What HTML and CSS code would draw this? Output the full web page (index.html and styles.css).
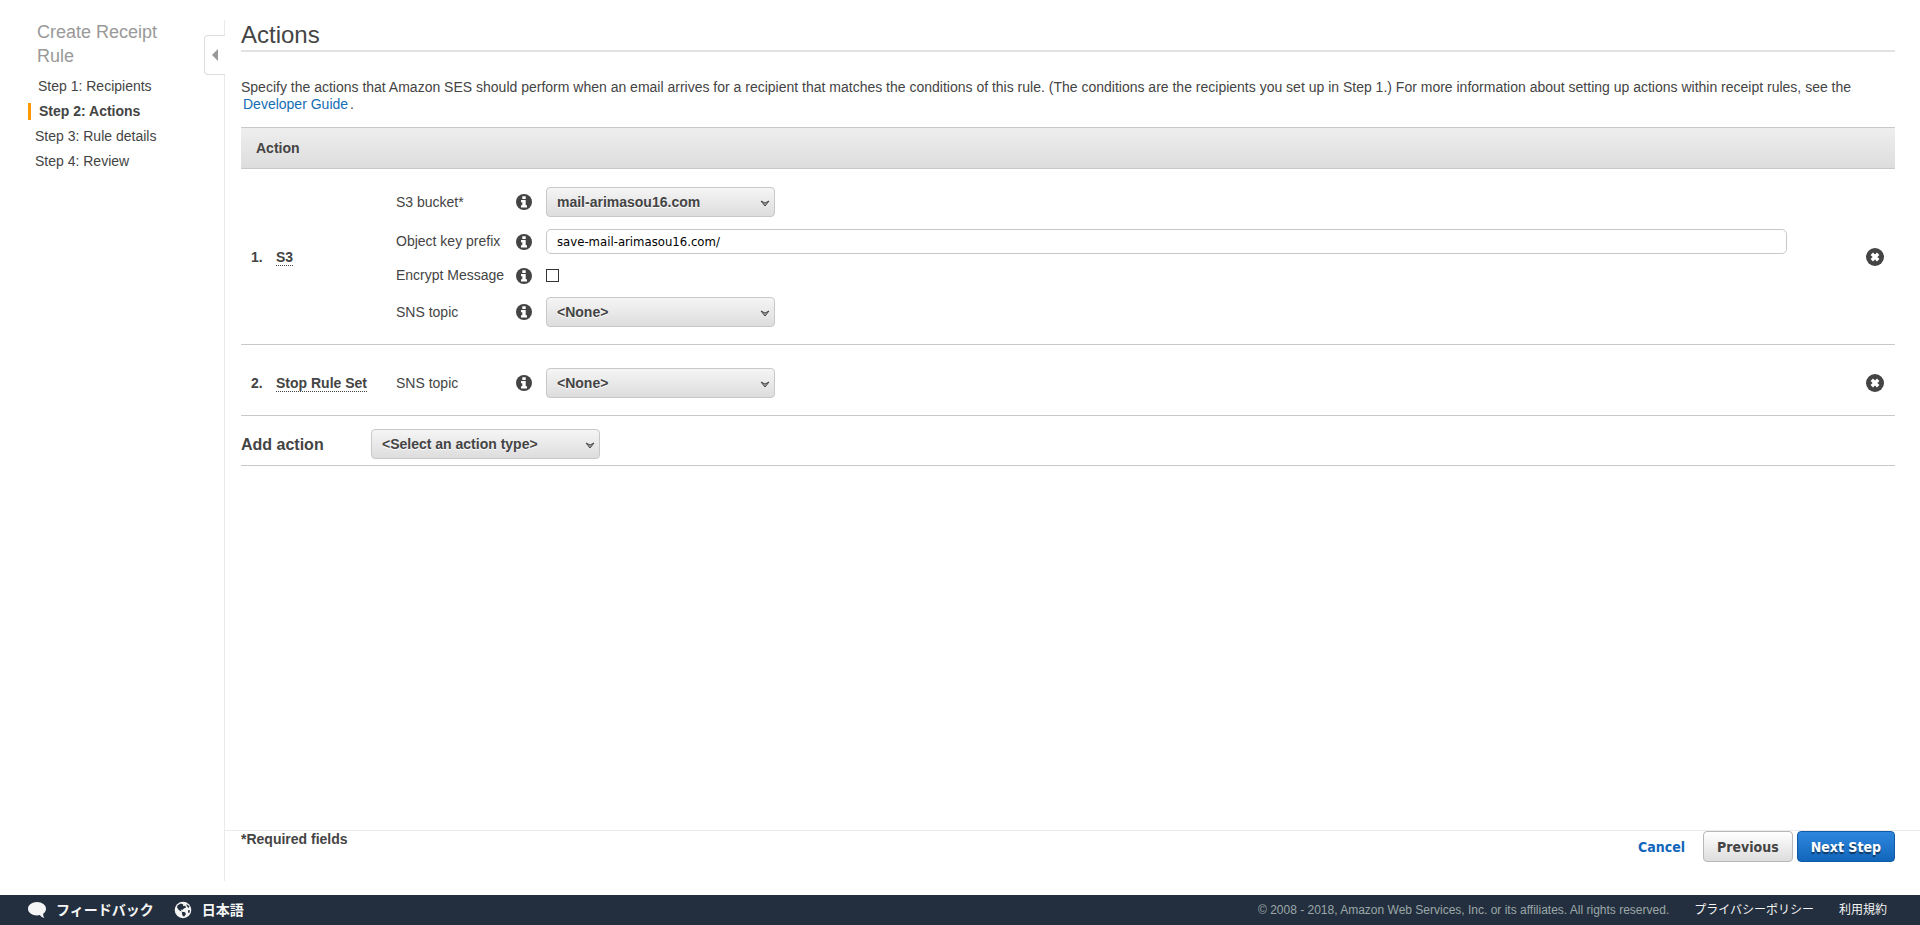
FILE: index.html
```html
<!DOCTYPE html>
<html lang="en">
  <head>
    <meta charset="UTF-8" />
    <meta name="viewport" content="width=device-width, initial-scale=1.0" />
    <title>Create Receipt Rule</title>
    <link rel="stylesheet" href="styles.css">
  </head>
  <body>
    <svg class="sprite" aria-hidden="true">
      <symbol id="icon-info" viewBox="0 0 16 16">
        <circle cx="8" cy="8" r="8" fill="#444" />
        <path d="M6.300 2.300h3.400v2.600h-3.400zM5 6h4.700v5.300h1.300v2.200H5v-2.200h1.300V8.200H5z" fill="#fff" />
      </symbol>
      <symbol id="icon-remove" viewBox="0 0 18 18">
        <circle cx="9" cy="9" r="9" fill="#444" />
        <path d="M5.8 5.8l6.4 6.4M12.2 5.8l-6.4 6.4" stroke="#fff" stroke-width="3.4" />
      </symbol>
    </svg>

    <div class="wizard">
      <nav class="sidebar">
        <h2 class="wizard-title">Create Receipt Rule</h2>
        <ul class="steps">
          <li class="done"><a href="#recipients">Step 1: Recipients</a></li>
          <li class="current"><a href="#actions">Step 2: Actions</a></li>
          <li>Step 3: Rule details</li>
          <li>Step 4: Review</li>
        </ul>
        <button class="collapse" aria-label="Collapse"></button>
      </nav>

      <main class="content">
        <h1 class="page-title">Actions</h1>
        <p class="intro">
          Specify the actions that Amazon SES should perform when an email arrives for a recipient that matches the conditions of this rule. (The conditions are the recipients you set up in Step 1.) For more information about setting up actions within receipt rules, see the
          <a href="#guide">Developer Guide</a>.
        </p>

        <div class="table-head">Action</div>

        <section class="action">
          <div class="number">1.</div>
          <div class="name"><abbr>S3</abbr></div>
          <div class="fields">
            <div class="field">
              <label for="bucket">S3 bucket*</label>
              <svg class="info"><use href="#icon-info" /></svg>
              <select id="bucket" class="select"><option>mail-arimasou16.com</option></select>
            </div>
            <div class="field">
              <label for="prefix">Object key prefix</label>
              <svg class="info"><use href="#icon-info" /></svg>
              <input id="prefix" class="text" type="text" value="save-mail-arimasou16.com/">
            </div>
            <div class="field">
              <label for="encrypt">Encrypt Message</label>
              <svg class="info"><use href="#icon-info" /></svg>
              <input id="encrypt" class="check" type="checkbox">
            </div>
            <div class="field">
              <label for="topic1">SNS topic</label>
              <svg class="info"><use href="#icon-info" /></svg>
              <select id="topic1" class="select"><option>&lt;None&gt;</option></select>
            </div>
          </div>
          <button class="remove" aria-label="Remove S3"><svg><use href="#icon-remove" /></svg></button>
        </section>

        <section class="action">
          <div class="number">2.</div>
          <div class="name"><abbr>Stop Rule Set</abbr></div>
          <div class="fields">
            <div class="field">
              <label for="topic2">SNS topic</label>
              <svg class="info"><use href="#icon-info" /></svg>
              <select id="topic2" class="select"><option>&lt;None&gt;</option></select>
            </div>
          </div>
          <button class="remove" aria-label="Remove Stop Rule Set"><svg><use href="#icon-remove" /></svg></button>
        </section>

        <div class="add-action">
          <label for="add">Add action</label>
          <select id="add" class="select"><option>&lt;Select an action type&gt;</option></select>
        </div>

        <div class="bottom">
          <div class="required">*Required fields</div>
          <div class="buttons">
            <a class="cancel" href="#cancel">Cancel</a>
            <button class="btn">Previous</button>
            <button class="btn primary">Next Step</button>
          </div>
        </div>
      </main>
    </div>

    <footer class="footer" lang="ja">
      <a class="tool" href="#feedback">
        <svg viewBox="0 0 18 18">
          <path d="M9 1C4 1 0 4 0 7.700C0 11.500 4 14.400 9 14.400C10 14.400 11 14.300 11.800 14.100C12.900 15.700 14.500 16.700 16.400 17C15.500 15.800 15 14.300 15.200 12.700C17 11.500 18 9.700 18 7.700C18 4 14 1 9 1z" fill="#f5f5f5" />
        </svg>
        フィードバック
      </a>
      <a class="tool" href="#language">
        <svg viewBox="0 0 18 18">
          <circle cx="9" cy="9" r="8.300" fill="#f5f5f5" />
          <path d="M3.500 4.500L6.500 2.500L9.300 3.500L9 5L11.300 4.700L12 6.400L9.800 7.500L8.500 9L6.800 8.400L7.500 10.500L5 9.200L3 6.500zM7.800 10.700L11 11.300L12 13L10 15.800L8.300 14.200zM12.500 3L15.500 5.500L14.500 7L12.800 5zM14 9.500L16 9L15.400 12L14 11.500z" fill="#232f3e" />
        </svg>
        日本語
      </a>
      <span class="copyright">© 2008 - 2018, Amazon Web Services, Inc. or its affiliates. All rights reserved.</span>
      <a class="legal" href="#privacy">プライバシーポリシー</a>
      <a class="legal" href="#terms">利用規約</a>
    </footer>
  </body>
</html>
```

FILE: styles.css
```css
* {
  box-sizing: border-box;
  margin: 0;
  padding: 0;
}

body {
  min-height: 100vh;
  display: flex;
  flex-direction: column;
  background: #fff;
  color: #444;
  font: 14px/17px "Liberation Sans", Arial, "Noto Sans CJK JP", sans-serif;
}

a {
  color: #146eb4;
  text-decoration: none;
}

.sprite {
  display: none;
}

.wizard {
  flex: 1;
  display: flex;
  padding: 20px 0 14px;
}

/* sidebar */
.sidebar {
  position: relative;
  flex: none;
  width: 225px;
  padding-left: 28px;
  border-right: 1px solid #eaeaea;
}

.wizard-title {
  width: 140px;
  margin-bottom: 10px;
  padding-left: 9px;
  color: #999;
  font-size: 18px;
  font-weight: normal;
  line-height: 24px;
}

.steps {
  list-style: none;
}

.steps li {
  margin-bottom: 8px;
  padding-left: 7px;
}

.steps a {
  color: #444;
}

.steps .done {
  padding-left: 10px;
}

.steps .current {
  padding-left: 8px;
  border-left: 3px solid #ff9900;
  font-weight: bold;
}

.collapse {
  position: absolute;
  top: 15px;
  right: -1px;
  width: 21px;
  height: 40px;
  background: #fff;
  border: 1px solid #ddd;
  border-right: none;
  border-radius: 4px 0 0 4px;
}

.collapse::before {
  content: "";
  display: block;
  width: 0;
  margin-left: 7px;
  border: 6px solid transparent;
  border-left: none;
  border-right-color: #999;
}

/* content */
.content {
  flex: 1;
  min-width: 0;
  display: flex;
  flex-direction: column;
  padding: 0 25px 0 16px;
}

.page-title {
  height: 32px;
  margin-bottom: 27px;
  border-bottom: 2px solid #e2e2e2;
  font-size: 24px;
  font-weight: normal;
  line-height: 30px;
}

.intro {
  margin-bottom: 14px;
}

.intro a {
  padding: 0 2px;
}

.table-head {
  height: 42px;
  padding-left: 15px;
  background: linear-gradient(#eee, #ddd);
  border: solid #c8c8c8;
  border-width: 1px 0;
  font-weight: bold;
  line-height: 40px;
}

.action {
  display: flex;
  align-items: center;
  padding: 18px 11px 17px 10px;
  border-bottom: 1px solid #c8c8c8;
}

.action + .action {
  padding-top: 23px;
}

.number {
  width: 25px;
  font-weight: bold;
}

.name {
  width: 120px;
  font-weight: bold;
}

.name abbr {
  border-bottom: 1px dotted #444;
}

.fields {
  flex: 1;
  display: flex;
  flex-direction: column;
  gap: 12px;
  margin-right: 79px;
}

.field {
  display: flex;
  align-items: center;
  min-height: 19px;
}

.field label {
  width: 120px;
}

.info {
  width: 16px;
  height: 16px;
  margin-right: 14px;
}

.select {
  appearance: none;
  width: 229px;
  height: 30px;
  padding: 0 10px;
  color: #444;
  font: bold 14px "Liberation Sans", Arial, sans-serif;
  text-shadow: 0 1px 0 #fff;
  background:
    url("data:image/svg+xml,%3Csvg xmlns='http://www.w3.org/2000/svg' width='10' height='8'%3E%3Cpath d='M1 1l4 5 4-5-4 2z' fill='%23aaa' stroke='%23444'/%3E%3C/svg%3E") no-repeat right 4px top 12px,
    linear-gradient(#f5f5f5, #ddd);
  border: 1px solid #c8c8c8;
  border-radius: 4px;
}

.text {
  flex: 1;
  height: 25px;
  padding: 0 10px;
  color: #000;
  font: 13px "DejaVu Sans Condensed", Tahoma, sans-serif;
  border: 1px solid #c8c8c8;
  border-radius: 5px;
}

.check {
  appearance: none;
  width: 13px;
  height: 13px;
  background: #fff;
  border: 1px solid #333;
}

.remove {
  width: 18px;
  height: 18px;
  background: none;
  border: none;
  cursor: pointer;
}

.remove svg {
  display: block;
  width: 18px;
  height: 18px;
}

.add-action {
  display: flex;
  align-items: center;
  padding: 13px 0 6px;
  border-bottom: 1px solid #c8c8c8;
}

.add-action label {
  width: 130px;
  font-size: 16px;
  font-weight: bold;
}

.bottom {
  display: flex;
  justify-content: space-between;
  margin: auto -25px 0 -16px;
  padding: 0 25px 19px 16px;
  border-top: 1px solid #eaeaea;
}

.required {
  font-weight: bold;
}

.buttons {
  display: flex;
  align-items: center;
  gap: 4px;
}

.cancel,
.btn {
  font: bold 14px "DejaVu Sans Condensed", Tahoma, sans-serif;
}

.cancel {
  margin-right: 14px;
  color: #1166bb;
}

.btn {
  height: 31px;
  padding: 0 13px;
  color: #444;
  background: linear-gradient(#fff, #ddd);
  border: 1px solid #b8b8b8;
  border-radius: 4px;
  cursor: pointer;
}

.primary {
  color: #fff;
  text-shadow: 0 2px 1px rgba(0, 0, 0, 0.5);
  background: linear-gradient(#2f87dd, #1166bb);
  border-color: #0f5ba8;
}

/* footer */
.footer {
  display: flex;
  align-items: center;
  height: 30px;
  padding: 0 33px 0 28px;
  background: #232f3e;
  font-size: 12px;
}

.footer a {
  color: #f5f5f5;
}

.tool {
  display: flex;
  align-items: center;
  gap: 10px;
  margin-right: 20px;
  font-size: 14px;
  font-weight: bold;
}

.tool svg {
  width: 18px;
  height: 18px;
}

.copyright {
  margin-left: auto;
  color: #9ba7a8;
}

.legal {
  margin-left: 25px;
}
```
